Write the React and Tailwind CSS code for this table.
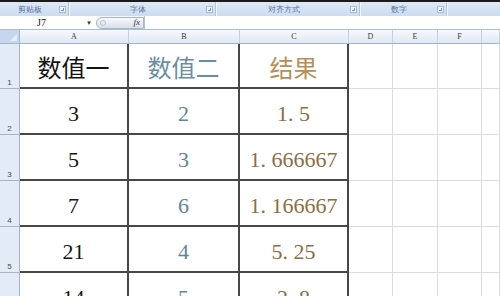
const GROUPS = [
  { label: '剪贴板', w: 'w-[70px]' },
  { label: '字体', w: 'w-[147px]' },
  { label: '对齐方式', w: 'w-[144px]' },
  { label: '数字', w: 'w-[87px]' },
];

const COLS = [
  { id: 'A', w: 'w-[109px]' },
  { id: 'B', w: 'w-[111px]' },
  { id: 'C', w: 'w-[109px]' },
  { id: 'D', w: 'w-[44px]' },
  { id: 'E', w: 'w-[45px]' },
  { id: 'F', w: 'w-[44px]' },
  { id: '', w: 'w-[18px]' },
];

const ROWS = [
  ['3', '2', '1.5'],
  ['5', '3', '1.666667'],
  ['7', '6', '1.166667'],
  ['21', '4', '5.25'],
  ['14', '5', '2.8'],
];

const TONES = ['text-[#161616]', 'text-[#62859a]', 'text-[#8f6d40]'];

// SimSun-like: the dot takes a full half-width cell
function Num({ v }) {
  const [a, b] = v.split('.');
  if (b === undefined) return <span>{a}</span>;
  return (
    <span>
      {a}
      <span className="inline-block w-[0.5em] text-left">.</span>
      {b}
    </span>
  );
}

function Launcher() {
  return (
    <div className="mr-[3px] flex h-[7px] w-[7px] items-center justify-center border border-[#a9bbd3] bg-[#eef3fa]">
      <div className="h-[3px] w-[3px] border-b border-r border-[#8193ad]" />
    </div>
  );
}

function Ribbon() {
  return (
    <div className="flex h-[16px] border-t-2 border-[#1b1b1b] bg-gradient-to-b from-[#dfe9f6] to-[#cbdcf0]">
      {GROUPS.map((g) => (
        <div
          key={g.label}
          className={`${g.w} flex items-center border-r border-r-[#f3f7fc] shadow-[inset_-1px_0_0_#b4c7e0]`}
        >
          <span className="flex-1 text-center text-[8px] leading-none text-[#56739c]">{g.label}</span>
          <Launcher />
        </div>
      ))}
      <div className="flex-1" />
    </div>
  );
}

function FormulaBar() {
  return (
    <div className="flex h-[14px] items-center border-b border-[#a9bdd6] bg-[#f4f7fb]">
      <div className="flex h-full w-[96px] items-center bg-white">
        <span className="w-[86px] pl-[37px] font-['Liberation_Serif'] text-[10px] leading-none text-[#222]">J7</span>
        <span className="text-[6px] leading-none text-[#333]">▼</span>
      </div>
      <div className="flex h-[12px] w-[48px] items-center rounded-l-full border border-[#aab6c6] bg-gradient-to-b from-[#f7f9fb] to-[#d9e0e9] pl-[3px]">
        <div className="h-[6px] w-[6px] rounded-full border border-[#b9c2cc]" />
        <span className="ml-auto mr-[3px] font-['Liberation_Serif'] text-[9px] italic leading-none text-[#333]">fx</span>
      </div>
      <div className="h-full flex-1 border-l border-[#b3c3d6] bg-white" />
    </div>
  );
}

function ColumnHeader() {
  return (
    <div className="flex h-[14px] border-b border-[#9eb6ce]">
      <div className="relative w-[20px] border-r border-[#9eb6ce] bg-[#c6d6ec]">
        <div className="absolute bottom-[2px] right-[2px] h-0 w-0 border-b-[7px] border-l-[7px] border-b-[#e8eef7] border-l-transparent" />
      </div>
      {COLS.map((c, i) => (
        <div
          key={i}
          className={`${c.w} flex items-center justify-center border-r border-[#c3d1e2] bg-gradient-to-b from-[#f6f9fd] to-[#e0e8f3] font-['Liberation_Serif'] text-[8px] leading-none text-[#3a3a3a]`}
        >
          {c.id}
        </div>
      ))}
    </div>
  );
}

function RowHead({ n }) {
  return (
    <div className="flex w-[20px] items-end justify-center border-b border-r border-[#a6b6c9] bg-[#e3ebf6] pb-[1px] font-['Liberation_Sans'] text-[8px] leading-none text-[#4a4a4a]">
      {n}
    </div>
  );
}

function BlankCells() {
  return COLS.slice(3).map((c, i) => (
    <div key={i} className={`${c.w} border-b border-r border-[#dcdcdc]`} />
  ));
}

export default function App() {
  return (
    <div className="h-[296px] w-[500px] overflow-hidden bg-white">
      <Ribbon />
      <FormulaBar />
      <ColumnHeader />

      <div className="flex h-[45px]">
        <RowHead n={1} />
        {['数值一', '数值二', '结果'].map((t, i) => (
          <div
            key={t}
            className={`${COLS[i].w} flex items-center justify-center border-b-2 border-r-2 border-[#474747] pt-[3px] font-['Noto_Sans_CJK_SC',sans-serif] text-[24px] leading-none ${
              ['text-[#141414]', 'text-[#6a8da2]', 'text-[#b78f58]'][i]
            }`}
          >
            {t}
          </div>
        ))}
        <BlankCells />
      </div>

      {ROWS.map((r, ri) => (
        <div key={ri} className="flex h-[46px]">
          <RowHead n={ri + 2} />
          {r.map((v, i) => (
            <div
              key={i}
              className={`${COLS[i].w} flex items-center justify-center border-b-2 border-r-2 border-[#474747] pt-[5px] font-['Liberation_Serif',serif] text-[22px] leading-none ${TONES[i]}`}
            >
              <Num v={v} />
            </div>
          ))}
          <BlankCells />
        </div>
      ))}
    </div>
  );
}
